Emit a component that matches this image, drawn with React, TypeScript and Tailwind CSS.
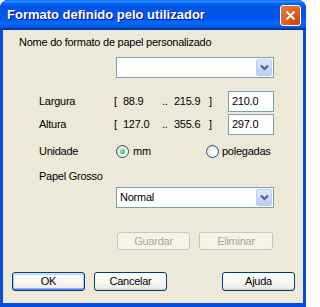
import React from "react";

const Chevron = () => (
  <svg width="9" height="7" viewBox="0 0 9 7">
    <path d="M1 1.5 L4.5 5 L8 1.5" fill="none" stroke="#4D6185" strokeWidth="2" />
  </svg>
);

const Combo = ({ value }: { value?: string }) => (
  <div className="ml-[113px] flex h-[21px] w-[158px] items-center border border-[#7F9DB9] bg-white pl-[3px]">
    <span className="flex-1 leading-[13px] text-black">{value}</span>
    <div className="m-[1px] flex h-[17px] w-[16px] items-center justify-center rounded-[2px] border border-[#B9CDF5] bg-[linear-gradient(to_bottom,#DDE8FE,#B7CCF9)]">
      <Chevron />
    </div>
  </div>
);

const Radio = ({ checked }: { checked?: boolean }) => (
  <div className="flex h-[13px] w-[13px] items-center justify-center rounded-full border border-[#1C5180] bg-[radial-gradient(circle_at_70%_70%,#FFFFFF,#DCDCD7)]">
    {checked && <div className="h-[5px] w-[5px] rounded-full bg-[radial-gradient(circle_at_35%_35%,#8CF08C,#219E21)]" />}
  </div>
);

const Button = ({
  label,
  width,
  disabled,
  isDefault,
  height,
}: {
  label: string;
  width: string;
  disabled?: boolean;
  isDefault?: boolean;
  height: string;
}) => {
  if (disabled) {
    return (
      <div className={`${width} ${height} flex items-center justify-center rounded-[3px] border border-[#C9C7BA] bg-[#F5F4EA] text-[#ACA899]`}>
        {label}
      </div>
    );
  }
  return (
    <div
      className={`${width} ${height} flex items-center justify-center rounded-[3px] border border-[#003C74] bg-[linear-gradient(to_bottom,#FFFFFF,#F0F0EA_85%,#D6D0C5)] text-black ${
        isDefault
          ? "shadow-[inset_0_1px_#CEE7FF,inset_0_-1px_#6982EE,inset_1px_0_#ADCCF5,inset_-1px_0_#ADCCF5,inset_0_2px_#BCD4F6,inset_0_-2px_#89ADE4]"
          : ""
      }`}
    >
      {label}
    </div>
  );
};

const Field = ({ value }: { value: string }) => (
  <div className="flex h-[21px] w-[46px] items-center border border-[#7F9DB9] bg-white pl-[3px] text-black">
    {value}
  </div>
);

const RangeRow = ({ label, min, max, value }: { label: string; min: string; max: string; value: string }) => (
  <div className="ml-[36px] flex h-[21px] items-center">
    <span className="w-[75px]">{label}</span>
    <span className="w-[9px]">[</span>
    <span className="w-[39px]">{min}</span>
    <span className="w-[12px]">..</span>
    <span className="w-[35px]">{max}</span>
    <span className="w-[19px]">]</span>
    <Field value={value} />
  </div>
);

export default function App() {
  return (
    <div className="h-[307px] w-[306px] bg-white">
      <div className="flex h-[307px] w-[306px] flex-col overflow-hidden rounded-t-[8px] bg-[#0A4EE0] font-['Liberation_Sans',Arial,sans-serif] text-[11px] leading-[13px] text-black">
        {/* Title bar */}
        <div className="flex h-[30px] items-center justify-between bg-[linear-gradient(to_bottom,#0058EE_0%,#3593FF_4%,#288EFF_6%,#127DFF_8%,#036FFC_10%,#0262EE_14%,#0057E5_20%,#0054E3_24%,#0055EB_56%,#005BF5_66%,#026AFE_76%,#0062EF_86%,#0052D6_92%,#0040AB_94%,#003092_100%)] pl-[7px] pr-[5px]">
          <span className="text-[13px] font-bold leading-[16px] text-white [text-shadow:1px_1px_#0F1089]">
            Formato definido pelo utilizador
          </span>
          <div className="flex h-[21px] w-[21px] items-center justify-center rounded-[3px] border border-white bg-[radial-gradient(circle_at_85%_85%,#CC4600,#DC6527_55%,#E97D4D)]">
            <svg width="11" height="11" viewBox="0 0 11 11">
              <path d="M1.5 1.5 L9.5 9.5 M9.5 1.5 L1.5 9.5" stroke="white" strokeWidth="2" />
            </svg>
          </div>
        </div>

        {/* Body */}
        <div className="mx-[3px] mb-[4px] flex flex-1 flex-col bg-[#ECE9D8] pt-[6px] tracking-[-0.25px]">
          <span className="pl-[16px]">Nome do formato de papel personalizado</span>
          <div className="mt-[8px]">
            <Combo />
          </div>

          <div className="mt-[13px]">
            <RangeRow label="Largura" min="88.9" max="215.9" value="210.0" />
          </div>
          <div className="mt-[2px]">
            <RangeRow label="Altura" min="127.0" max="355.6" value="297.0" />
          </div>

          <div className="ml-[36px] mt-[9px] flex h-[15px] items-center">
            <span className="w-[77px]">Unidade</span>
            <div className="flex w-[90px] items-center gap-[4px]">
              <Radio checked />
              <span>mm</span>
            </div>
            <div className="flex items-center gap-[3px]">
              <Radio />
              <span>polegadas</span>
            </div>
          </div>

          <span className="ml-[36px] mt-[11px]">Papel Grosso</span>
          <div className="mt-[4px]">
            <Combo value="Normal" />
          </div>

          <div className="ml-[114px] mt-[24px] flex gap-[9px]">
            <Button label="Guardar" width="w-[73px]" height="h-[18px]" disabled />
            <Button label="Eliminar" width="w-[74px]" height="h-[18px]" disabled />
          </div>

          <div className="ml-[9px] mt-[22px] flex">
            <Button label="OK" width="w-[73px]" height="h-[19px]" isDefault />
            <div className="ml-[9px]">
              <Button label="Cancelar" width="w-[73px]" height="h-[19px]" />
            </div>
            <div className="ml-[55px]">
              <Button label="Ajuda" width="w-[73px]" height="h-[19px]" />
            </div>
          </div>
        </div>
      </div>
    </div>
  );
}
